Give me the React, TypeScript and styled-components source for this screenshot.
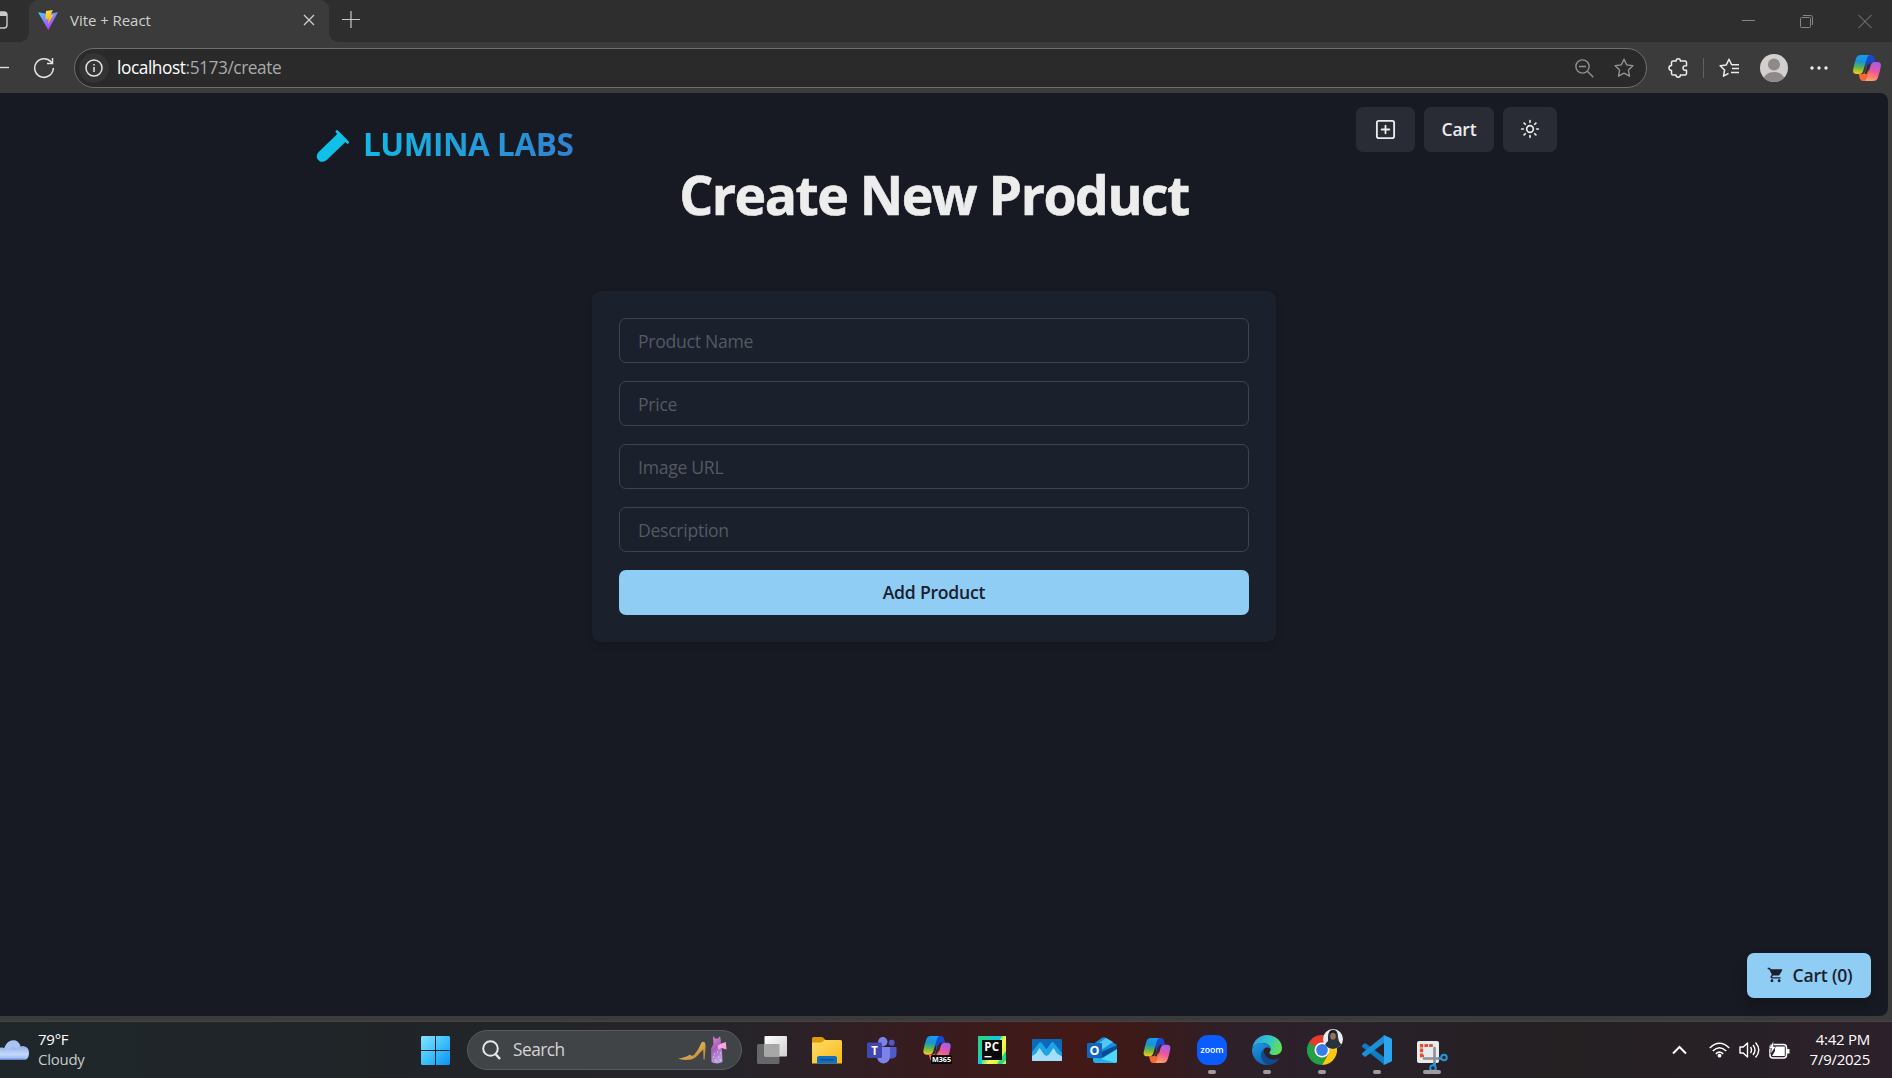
import React from 'react';
import styled, { createGlobalStyle } from 'styled-components';
import { SquarePlus, Sun } from 'lucide-react';
import { IoMdCart } from 'react-icons/io';

const GlobalStyle = createGlobalStyle`
  * { box-sizing: border-box; }
  html, body { margin: 0; padding: 0; background: #3b3b3b; }
  body { font-family: 'Open Sans', 'Noto Sans', sans-serif; overflow: hidden; }
  svg { display: block; flex: none; }
`;

const Screen = styled.div`
  display: flex;
  flex-direction: column;
  width: 1892px;
  height: 1078px;
  overflow: hidden;
  background: #3b3b3b;
`;

/* ---------- browser chrome ---------- */

const TabStrip = styled.div`
  display: flex;
  height: 42px;
  background: #2e2e2e;
`;

const TabMenuSlot = styled.div`
  width: 29px;
  padding-top: 11px;
`;

const Tab = styled.div`
  position: relative;
  display: flex;
  align-items: center;
  width: 300px;
  height: 42px;
  padding: 0 14px 3px 9px;
  background: #3b3b3b;
  border-radius: 9px 9px 0 0;

  &::before,
  &::after {
    content: '';
    position: absolute;
    bottom: 0;
    width: 9px;
    height: 9px;
  }
  &::before {
    left: -9px;
    background: radial-gradient(circle at 0 0, transparent 8.5px, #3b3b3b 9px);
  }
  &::after {
    right: -9px;
    background: radial-gradient(circle at 100% 0, transparent 8.5px, #3b3b3b 9px);
  }
`;

const TabTitle = styled.span`
  flex: 1;
  margin-left: 12px;
  font-size: 15px;
  line-height: 20px;
  letter-spacing: -0.05px;
  color: #d0d0d0;
`;

const NewTab = styled.div`
  padding: 11px 0 0 13px;
`;

const WindowControls = styled.div`
  display: flex;
  gap: 45px;
  margin-left: auto;
  padding: 14px 20px 0 0;
`;

const Toolbar = styled.div`
  display: flex;
  align-items: center;
  height: 51px;
  padding: 1px 11px 0 0;
`;

const NavButtons = styled.div`
  display: flex;
  align-items: center;
  gap: 24px;
  width: 74px;
`;

const AddressBar = styled.div`
  display: flex;
  align-items: center;
  width: 1573px;
  height: 40px;
  padding: 0 12px 0 4px;
  background: #2a2a2a;
  border: 1px solid #6e6e6e;
  border-radius: 20px;
`;

const SiteInfo = styled.div`
  display: grid;
  place-items: center;
  width: 30px;
  height: 30px;
  border-radius: 50%;
  background: #343434;
`;

const Url = styled.span`
  flex: 1;
  margin-left: 8px;
  padding-bottom: 1px;
  font-size: 17.3px;
  line-height: 24px;
  letter-spacing: -0.43px;
  color: #a9a9a9;
  b { font-weight: 400; color: #fff; }
`;

const AddressIcons = styled.div`
  display: flex;
  align-items: center;
  gap: 20px;
`;

const ToolbarIcons = styled.div`
  display: flex;
  align-items: center;
  margin-left: 6px;
`;

const ToolbarItem = styled.div<{ $gap: number }>`
  margin-left: ${(p) => p.$gap}px;
`;

const Divider = styled.i`
  width: 1px;
  height: 20px;
  margin-left: 15px;
  background: #606060;
`;

const Avatar = styled.div`
  width: 28px;
  height: 28px;
  overflow: hidden;
  border-radius: 50%;
  background: #d2d0ce;
`;

/* ---------- web page ---------- */

const Page = styled.main`
  display: flex;
  flex-direction: column;
  width: 1888px;
  height: 923px;
  padding: 14px 17px 18px 0;
  background: #181a23;
  border-radius: 0 8px 8px 0;
`;

const Header = styled.header`
  display: flex;
  justify-content: space-between;
  width: 1241px;
  height: 57px;
  margin-left: 316px;
`;

const Brand = styled.div`
  display: flex;
  align-items: center;
  gap: 13px;
  height: 45px;
  margin-top: 16px;
`;

const BrandName = styled.span`
  margin-top: -3px;
  font-size: 31.5px;
  font-weight: 700;
  line-height: 44px;
  letter-spacing: -0.45px;
  color: transparent;
  background: linear-gradient(to right, #13b9e4, #3182ce);
  background-clip: text;
  -webkit-background-clip: text;
`;

const Actions = styled.nav`
  display: flex;
  gap: 9px;
`;

const GhostButton = styled.button<{ $width: number }>`
  display: grid;
  place-items: center;
  width: ${(p) => p.$width}px;
  height: 45px;
  padding: 0 0 1px;
  border: 0;
  border-radius: 7px;
  background: #292c35;
  color: #ececec;
  font: 600 17.5px/24px 'Open Sans', 'Noto Sans', sans-serif;
  letter-spacing: -0.2px;
`;

const Title = styled.h1`
  width: 1868px;
  margin: 0;
  text-align: center;
  font-size: 53.5px;
  font-weight: 700;
  line-height: 62px;
  letter-spacing: -1.5px;
  color: #ededed;
  -webkit-text-stroke: 0.6px #ededed;
`;

const Card = styled.form`
  display: flex;
  flex-direction: column;
  gap: 18px;
  width: 684px;
  margin: 65px 0 0 592px;
  padding: 27px;
  background: #1a202c;
  border-radius: 9px;
  box-shadow: 0 4px 7px rgba(0, 0, 0, 0.13);
`;

const Field = styled.input`
  width: 100%;
  height: 45px;
  padding: 0 17px 0 18px;
  border: 1px solid #3f434d;
  border-radius: 7px;
  outline: 0;
  background: transparent;
  color: #ececec;
  font: 400 17.6px/24px 'Open Sans', 'Noto Sans', sans-serif;
  letter-spacing: -0.28px;
  &::placeholder { color: #555962; opacity: 1; }
`;

const PrimaryButton = styled.button<{ $floating?: boolean }>`
  display: flex;
  align-items: center;
  justify-content: center;
  gap: 9px;
  height: 45px;
  width: ${(p) => (p.$floating ? '124px' : '100%')};
  margin: ${(p) => (p.$floating ? 'auto 0 0 auto' : '0')};
  padding: 0 0 1px;
  border: 0;
  border-radius: 7px;
  background: #90cdf4;
  color: #1a202c;
  font: 600 17.6px/24px 'Open Sans', 'Noto Sans', sans-serif;
  letter-spacing: -0.22px;
  box-shadow: ${(p) => (p.$floating ? '0 8px 14px rgba(0,0,0,0.2)' : 'none')};
`;

/* ---------- taskbar ---------- */

const Taskbar = styled.footer`
  display: flex;
  align-items: center;
  height: 57px;
  margin-top: 5px;
  border-top: 1px solid #454547;
  background: linear-gradient(
    to right,
    #20272a 0, #1f2528 300px, #222428 500px, #26242a 740px,
    #371c1f 920px, #431916 1080px, #3c1a18 1130px, #2d2029 1240px,
    #2a212a 1340px, #242022 1560px, #2c212b 1892px
  );
`;

const Weather = styled.div`
  display: flex;
  align-items: center;
  gap: 9px;
  width: 421px;
`;

const Lines = styled.div<{ $right?: boolean }>`
  display: flex;
  flex-direction: column;
  text-align: ${(p) => (p.$right ? 'right' : 'left')};
  font-size: 15px;
  line-height: 20px;
  letter-spacing: -0.26px;
  color: #fff;
  padding-bottom: 3px;
`;

const Muted = styled.span`
  color: #c8cacb;
`;

const SearchBox = styled.div`
  display: flex;
  align-items: center;
  width: 275px;
  height: 40px;
  margin: 0 15px 0 17px;
  padding: 0 13px 0 14px;
  border: 1px solid #585b5e;
  border-radius: 20px;
  background: #414447;
`;

const SearchLabel = styled.span`
  flex: 1;
  margin-left: 12px;
  font-size: 17.3px;
  line-height: 24px;
  letter-spacing: -0.5px;
  color: #d3d4d5;
`;

const Apps = styled.div`
  display: flex;
  gap: 25px;
`;

const AppSlot = styled.div<{ $drop?: number }>`
  position: relative;
  display: grid;
  place-items: center;
  width: 30px;
  height: 56px;
  padding-top: ${(p) => p.$drop ?? 0}px;
`;

const Running = styled.i<{ $active?: boolean }>`
  position: absolute;
  bottom: 4px;
  left: ${(p) => (p.$active ? 6 : 11)}px;
  width: ${(p) => (p.$active ? 18 : 8)}px;
  height: 4px;
  border-radius: 2px;
  background: #9f9b9f;
`;

const ProfileBadge = styled.div`
  position: absolute;
  top: 7px;
  left: 16px;
`;

const Tray = styled.div`
  display: flex;
  align-items: center;
  margin-left: auto;
  padding-right: 22px;
`;

const TrayStatus = styled.div`
  display: flex;
  align-items: center;
  gap: 9px;
  width: 101px;
  margin-left: 22px;
`;

/* ---------- drawings ---------- */

const ViteLogo = () => (
  <svg width="20" height="20" viewBox="0 0 20 20">
    <defs>
      <linearGradient id="vite-a" x1="0" y1="0" x2="0.6" y2="1">
        <stop offset="0" stopColor="#41d1ff" /><stop offset="1" stopColor="#bd34fe" />
      </linearGradient>
      <linearGradient id="vite-b" x1="0" y1="0" x2="0.2" y2="1">
        <stop offset="0" stopColor="#ffe34a" /><stop offset="1" stopColor="#ffa800" />
      </linearGradient>
    </defs>
    <path d="M0 2.2 10 4l10-1.8L10.3 20z" fill="url(#vite-a)" />
    <path d="M8 1 14.8 0l-2.3 5.2 3.3-.6-5.8 9.6.6-5.4-3.2.7z" fill="url(#vite-b)" />
  </svg>
);

const CopilotLogo = ({ id, width = 28, height = 26 }: { id: string; width?: number; height?: number }) => (
  <svg width={width} height={height} viewBox="0 0 28 26">
    <defs>
      <linearGradient id={`${id}-l`} x1="0.4" y1="0" x2="0.3" y2="1">
        <stop offset="0" stopColor="#149cf2" /><stop offset="0.35" stopColor="#1b93cf" />
        <stop offset="0.65" stopColor="#5eb653" /><stop offset="1" stopColor="#f8cb12" />
      </linearGradient>
      <linearGradient id={`${id}-r`} x1="0.7" y1="0" x2="0.4" y2="1">
        <stop offset="0" stopColor="#a25bf0" /><stop offset="0.5" stopColor="#ee569d" />
        <stop offset="1" stopColor="#ffa15b" />
      </linearGradient>
    </defs>
    <path d="M10 0h8.2q2.2 0 2.9 2.3L22.3 7h-3.8q-2 0-2.7 2.4l-1.9 6.3z" fill="#1748cf" />
    <path d="M18 26H9.8q-2.2 0-2.9-2.3L5.7 19h3.8q2 0 2.7-2.4l2-6.4z" fill="#f36a3a" />
    <path d="M7.8 0h8.6q-1.8.8-2.5 3.2l-3.7 12.6Q9.2 19 6.3 19H3.7Q-.6 19 .2 14.5 1.2 8.6 3.2 3 4.3 0 7.8 0z" fill={`url(#${id}-l)`} />
    <path d="M20.2 26h-8.6q1.8-.8 2.5-3.2l3.7-12.6Q18.8 7 21.7 7h2.6q4.3 0 3.5 4.5-1 5.9-3 11.5-1.100 3-4.600 3z" fill={`url(#${id}-r)`} />
    <path d="M14.600 9.500h2.700l-3.600 9.500H11.600z" fill="#2e2b2e" />
  </svg>
);

const TestTube = () => (
  <svg width="34" height="34" viewBox="0 0 34 34" fill="#0fc1e9">
    <path d="M20 6.200 22 3.500 30.500 12 28.300 14 11 30.800Q7.500 34 3.600 32.200-.3 30 1.100 25.600 1.500 24.200 2.700 23z" />
    <path d="M20.900 2.600 31.600 13.200" stroke="#0fc1e9" strokeWidth="2.800" strokeLinecap="round" />
  </svg>
);

const starPath = 'M10 1.200l2.700 5.700 6.200.8-4.500 4.300 1.100 6.200L10 15.200l-5.500 3 1.100-6.200L1.100 7.700l6.200-.8z';

const FolderIcon = () => (
  <svg width="30" height="27" viewBox="0 0 30 27">
    <defs><linearGradient id="folder" x1="0" y1="0" x2="1" y2="1"><stop stopColor="#ffdc6b" /><stop offset="1" stopColor="#f9b916" /></linearGradient></defs>
    <path d="M0 1.500Q0 0 1.500 0h8q1 0 1.800.8L13.500 3v5H0z" fill="#dd9a06" />
    <path d="M0 5.500h9.500L12.500 3H28.500Q30 3 30 4.500V26.500H0z" fill="url(#folder)" />
    <path d="M5 26.500V21q0-2 2-2h16q2 0 2 2v5.500z" fill="#0f6fc0" />
    <path d="M8 22.800h14" stroke="#0b4b8c" strokeWidth="1.300" />
  </svg>
);

const TeamsIcon = () => (
  <svg width="30" height="27" viewBox="0 0 30 27">
    <circle cx="24.700" cy="5.700" r="3" fill="#5059c9" />
    <circle cx="15.800" cy="4.800" r="4.700" fill="#7b83eb" />
    <path d="M20 10h9.500v6.500q0 5-5 5H20z" fill="#5059c9" />
    <path d="M10 10h13v9q0 7-6.500 7.500Q10 26 10 19z" fill="#7b83eb" />
    <rect x="0" y="5.500" width="15" height="15.500" rx="1.200" fill="#4247b0" />
    <text x="7.500" y="17.500" textAnchor="middle" fontFamily="Open Sans" fontWeight="700" fontSize="11.500" fill="#fff">T</text>
  </svg>
);

const M365Icon = () => (
  <svg width="30" height="28" viewBox="0 0 30 28">
    <CopilotLogo id="m365" width={30} height={25.5} />
    <rect x="9" y="19" width="21" height="9" rx="1.500" fill="#080808" />
    <text x="19.500" y="26" textAnchor="middle" fontFamily="Open Sans" fontWeight="700" fontSize="7.200" fill="#fff">M365</text>
  </svg>
);

const PyCharmIcon = () => (
  <svg width="28" height="28" viewBox="0 0 28 28">
    <defs><linearGradient id="pc" x1="0" y1="0" x2="1" y2="0.700"><stop stopColor="#21d789" /><stop offset="0.450" stopColor="#1fcfa4" /><stop offset="0.700" stopColor="#fcf84a" /><stop offset="1" stopColor="#c8ee4a" /></linearGradient></defs>
    <rect width="28" height="28" fill="url(#pc)" />
    <path d="M14 0h10l-3 5h-9zM0 22l4-2v8H0z" fill="#12c9dc" />
    <path d="M19 28 28 15v9l-4 4z" fill="#21d789" />
    <rect x="4" y="4" width="20" height="20" fill="#0a0a0a" />
    <text x="13.800" y="15.200" textAnchor="middle" fontFamily="Open Sans" fontWeight="700" fontSize="11.500" letterSpacing="0.300" fill="#fff">PC</text>
    <rect x="6.500" y="20" width="7" height="1.400" fill="#fff" />
  </svg>
);

const PhotosIcon = () => (
  <svg width="30" height="22" viewBox="0 0 30 22">
    <rect width="30" height="22" rx="1" fill="#0d68b8" />
    <path d="M0 13 7 4q1.500-1.500 3 .3l4.500 6L19 4q1.500-1.800 3 0l8 10v8H0z" fill="#1ea3e4" />
    <path d="M0 17l4-2.500L7.500 9 12 15.500l2.500 1.500L17 15.500 21.500 9 25 14.500l5 3V21q0 1-1 1H1q-1 0-1-1z" fill="#a5defa" />
  </svg>
);

const OutlookIcon = () => (
  <svg width="30" height="27" viewBox="0 0 30 27">
    <path d="M5 8 15 .8q2-1.300 4 0L30 8v16q0 2-2 2H8z" fill="#1490df" />
    <path d="M8 9 19 1l7 4-16 11z" fill="#4fc8f4" />
    <path d="M12 16 30 8v7L16 22z" fill="#0a4c98" />
    <path d="M8 25.500 30 12v12q0 2-2 2H9z" fill="#50d8fb" />
    <path d="M6 20 28 25.500q-1 .5-2 .5H9q-3 0-3-3z" fill="#24aef0" />
    <rect y="6" width="15" height="15" rx="1" fill="#1066bd" />
    <text x="7.500" y="17.800" textAnchor="middle" fontFamily="Open Sans" fontWeight="700" fontSize="12.500" fill="#fff">O</text>
  </svg>
);

const ZoomIcon = () => (
  <svg width="30" height="30" viewBox="0 0 30 30">
    <rect width="30" height="30" rx="11" fill="#0b5cff" />
    <text x="15" y="17.500" textAnchor="middle" fontFamily="Open Sans" fontWeight="600" fontSize="8.700" fill="#fff">zoom</text>
  </svg>
);

const EdgeIcon = () => (
  <svg width="30" height="30" viewBox="0 0 30 30">
    <defs>
      <linearGradient id="edge-t" x1="0" y1="0.300" x2="1" y2="0.600"><stop stopColor="#2f9fe0" /><stop offset="0.500" stopColor="#30c6cd" /><stop offset="1" stopColor="#66e24d" /></linearGradient>
      <linearGradient id="edge-b" x1="0" y1="0" x2="0.700" y2="1"><stop stopColor="#1e9be2" /><stop offset="1" stopColor="#0f58a8" /></linearGradient>
    </defs>
    <path d="M.3 13C1.500 5.500 7.500 0 15 0c8.500 0 15 6 15 13 0 4.500-3.500 7-7.500 7-3 0-5-1-5-2.300 0-1 1.200-1.200 1.200-3.700 0-3-3.200-6-8-6C6 8 2 10 .3 13z" fill="url(#edge-t)" />
    <path d="M0 15C.5 10.500 5 8 9.500 8c5 0 9.200 2.800 9.200 6-2-2-5-2-6.500 0C9 18.500 12 25.500 20 25.500c3 0 5.500-1 7.500-2.500C24.500 27.500 20 30 15 30 6.500 30 0 23 0 15z" fill="url(#edge-b)" />
    <path d="M12.200 14C10.500 15 9 17.500 9 20c0 4.500 3 8.500 7.500 9.900 4.500-.5 8.500-3 11-6.900-1 1-10 3.500-14-2.500-1.500-2.300-2-4.500-1.300-6.500z" fill="#114a8b" />
  </svg>
);

const ChromeIcon = () => (
  <svg width="30" height="30" viewBox="0 0 30 30">
    <path d="M15 15 2 7.500A15 15 0 0 1 28 7.500z" fill="#e33b2e" />
    <path d="M2 7.500A15 15 0 0 0 15 30l6.500-11.200L15 15z" fill="#23a047" />
    <path d="M28 7.500A15 15 0 0 1 15 30l6.500-11.200L15 7.500z" fill="#fdc70c" />
    <path d="M2 7.500 8.500 18.800 15 15V7.500h13L24 3 6 3z" fill="#e33b2e" />
    <path d="M2 7.500 8.500 18.800 12 22 15 15z" fill="#23a047" />
    <circle cx="15" cy="15" r="7.500" fill="#fff" /><circle cx="15" cy="15" r="5.900" fill="#3a7de8" />
  </svg>
);

const ProfilePhoto = () => (
  <svg width="20" height="20" viewBox="0 0 20 20">
    <clipPath id="profile"><circle cx="10" cy="10" r="10" /></clipPath>
    <g clipPath="url(#profile)">
      <rect width="20" height="20" fill="#eceeee" />
      <path d="M5 8Q5 1 10 .8T15 8q0 4 3.500 8v4H2q-1-5 3-8z" fill="#28343a" />
      <ellipse cx="10" cy="7" rx="2.800" ry="3.800" fill="#94705f" />
      <path d="M7 5.500Q10 1.500 13 5.500L13 3Q10 0 7 3z" fill="#191b20" />
    </g>
  </svg>
);

const CodeIcon = () => (
  <svg width="30" height="30" viewBox="0 0 30 30">
    <path d="M0 10.500 2.300 8.500q.8-.5 1.600 0L22 22v7.500L.3 12q-.8-.7-.3-1.500z" fill="#0f7cc4" />
    <path d="M0 19.500 2.300 21.500q.8.500 1.600 0L22 8V.5L.3 18q-.8.7-.3 1.500z" fill="#1b8fd8" />
    <path d="M21 .7Q22 0 23 .4l6 2.800q1 .5 1 1.600v20.400q0 1.100-1 1.600l-6 2.800q-1 .4-2-.3 1 .3 1-1.200V1.900Q22 .4 21 .7z" fill="#2ba7f2" />
  </svg>
);

const SnipIcon = () => (
  <svg width="31" height="32" viewBox="0 0 31 32">
    <rect y="1" width="22" height="22" rx="2" fill="#e9e9ee" />
    <path d="M4.500 17V5.500h12" fill="none" stroke="#e0512f" strokeWidth="3.200" strokeDasharray="3.600 1.200" />
    <path d="M3 16h4" stroke="#e0512f" strokeWidth="2.500" />
    <path d="M17.500 8v17M7 18.500h17" stroke="#8d9096" strokeWidth="2.600" strokeLinecap="round" />
    <circle cx="27" cy="17.500" r="2.800" fill="none" stroke="#2493d8" strokeWidth="2" />
    <circle cx="16" cy="28" r="2.800" fill="none" stroke="#2493d8" strokeWidth="2" />
    <path d="M17.500 22v4M21 18.500h3.500" stroke="#2493d8" strokeWidth="2" />
  </svg>
);

const TaskViewIcon = () => (
  <svg width="30" height="28" viewBox="0 0 30 28">
    <defs><linearGradient id="tv" x1="0" y1="0" x2="1" y2="1"><stop stopColor="#fff" /><stop offset="1" stopColor="#cfcfcf" /></linearGradient></defs>
    <rect y="8" width="22.500" height="20" rx="1.500" fill="#666769" />
    <rect x="7.500" width="22.500" height="20.500" rx="1" fill="url(#tv)" />
    <path d="M7.500 8h15v12.500h-15z" fill="#a7a7a7" />
  </svg>
);

const WindowsLogo = () => (
  <svg width="29" height="29" viewBox="0 0 29 29">
    <defs><linearGradient id="win" gradientUnits="userSpaceOnUse" x1="0" y1="0" x2="29" y2="29"><stop stopColor="#86e2ff" /><stop offset="0.500" stopColor="#3fc1fb" /><stop offset="1" stopColor="#0a92f5" /></linearGradient></defs>
    <path d="M1 0h13v14H0V1zM15 0h13l1 1v13H15zM0 15h14v14H1l-1-1zM15 15h14v13l-1 1H15z" fill="url(#win)" />
  </svg>
);

const SearchHighlight = () => (
  <svg width="50" height="30" viewBox="0 0 50 30">
    <defs>
      <linearGradient id="shoe" x1="0" y1="0" x2="1" y2="1"><stop stopColor="#f8d77b" /><stop offset="1" stopColor="#b97f26" /></linearGradient>
      <linearGradient id="dress" x1="0" y1="0" x2="0.300" y2="1"><stop stopColor="#ee8fdc" /><stop offset="0.500" stopColor="#a35fb5" /><stop offset="1" stopColor="#bfa0e4" /></linearGradient>
    </defs>
    <path d="M0 23.800Q8 22.500 12 19.500q1.500 2.500 4.500 0Q21 14 23.500 7.500q2.500-1.500 3.500.5.800 2 .5 5l-.8 11.500h-1.200L25.200 14.500Q22.500 17 19.500 20.500q-3.500 4-8.500 4.300Q4 25.200 0 23.800z" fill="url(#shoe)" />
    <path d="M35 1l2 2.500h3L42 1l1 5-.5 4 1.500 5 .5 12q-5.500 2.800-11 0L33 14l2.500-5z" fill="url(#dress)" />
    <path d="M42 9l5.800-2 .7 7.500-5-1.500-3 2-1-4z" fill="#f7a3e6" />
    <path d="M36 19h1M40 22h1M37 25h1M42 18h1M39 17h1M42 25h1M35 22h1" stroke="#ecdcff" />
  </svg>
);

const WeatherIcon = () => (
  <svg width="29" height="20" viewBox="0 0 29 20">
    <defs><linearGradient id="cloud" x1="0" y1="0" x2="0" y2="1"><stop stopColor="#8faee9" /><stop offset="0.600" stopColor="#c5d8fa" /><stop offset="1" stopColor="#8fb1f0" /></linearGradient></defs>
    <path d="M4 13Q3.500 8 6 4.500 9 .3 13.500.3q5 0 7 5.700V16H5z" fill="#a9c3f2" />
    <path d="M-5 14q0-6 6-6.500Q5 7 8 10q3-5 10-1 1-3 5-3 6 .5 6 7t-5 7H0z" fill="url(#cloud)" />
    <path d="M0 19.300h25" stroke="#557dc7" />
  </svg>
);

const fields = ['Product Name', 'Price', 'Image URL', 'Description'];

const apps: { name: string; icon: React.ReactNode; running?: boolean; active?: boolean; drop?: number; badge?: React.ReactNode }[] = [
  { name: 'task-view', icon: <TaskViewIcon /> },
  { name: 'explorer', icon: <FolderIcon /> },
  { name: 'teams', icon: <TeamsIcon /> },
  { name: 'm365', icon: <M365Icon /> },
  { name: 'pycharm', icon: <PyCharmIcon /> },
  { name: 'photos', icon: <PhotosIcon /> },
  { name: 'outlook', icon: <OutlookIcon /> },
  { name: 'copilot', icon: <CopilotLogo id="task-copilot" width={28} height={25} /> },
  { name: 'zoom', icon: <ZoomIcon />, running: true },
  { name: 'edge', icon: <EdgeIcon />, running: true },
  { name: 'chrome', icon: <ChromeIcon />, running: true, badge: <ProfilePhoto /> },
  { name: 'code', icon: <CodeIcon />, running: true },
  { name: 'snip', icon: <SnipIcon />, running: true, active: true, drop: 12 },
];

const BrowserChrome = () => (
  <>
    <TabStrip>
      <TabMenuSlot>
        <svg width="9" height="18" viewBox="0 0 9 18">
          <rect x="-9" y="1" width="16" height="16" rx="3" fill="none" stroke="#c9c9c9" strokeWidth="1.400" />
          <path d="M0 1h5q2 0 2 3v1H0z" fill="#c9c9c9" />
        </svg>
      </TabMenuSlot>
      <Tab>
        <ViteLogo />
        <TabTitle>Vite + React</TabTitle>
        <svg width="12" height="12" viewBox="0 0 12 12" stroke="#d0d0d0" strokeWidth="1.300"><path d="M1 1l10 10M11 1L1 11" /></svg>
      </Tab>
      <NewTab>
        <svg width="18" height="18" viewBox="0 0 18 18" stroke="#c9c9c9" strokeWidth="1.200"><path d="M9 0v17M0 8.500h18" /></svg>
      </NewTab>
      <WindowControls>
        <svg width="13" height="14" viewBox="0 0 13 14" stroke="#858585"><path d="M0 6.500h13" /></svg>
        <svg width="13" height="14" viewBox="0 0 13 14" fill="none" stroke="#858585">
          <rect x=".5" y="3.500" width="10" height="10" rx="1" /><path d="M3 1.500h7.500q2 0 2 2V11" />
        </svg>
        <svg width="14" height="14" viewBox="0 0 14 14" stroke="#858585"><path d="M.5 1l13 13M13.500 1l-13 13" /></svg>
      </WindowControls>
    </TabStrip>
    <Toolbar>
      <NavButtons>
        <svg width="9" height="20" viewBox="0 0 9 20" stroke="#ddd" strokeWidth="1.400"><path d="M0 9.500h9" /></svg>
        <svg width="22" height="22" viewBox="0 0 22 22" fill="none" stroke="#e4e4e4" strokeWidth="1.500">
          <path d="M20.300 11a9.300 9.300 0 1 1-2.400-6.200l1.600 1.500M19.500 1v5.500H14" />
        </svg>
      </NavButtons>
      <AddressBar>
        <SiteInfo>
          <svg width="18" height="18" viewBox="0 0 18 18" fill="none" stroke="#e4e4e4" strokeWidth="1.500"><circle cx="9" cy="9" r="8" /><path d="M9 8v5M9 5v1.500" /></svg>
        </SiteInfo>
        <Url><b>localhost</b>:5173/create</Url>
        <AddressIcons>
          <svg width="19" height="19" viewBox="0 0 19 19" fill="none" stroke="#919191" strokeWidth="1.400"><circle cx="7.500" cy="7.500" r="6.600" /><path d="M4 7.500h7M12.300 12.300l6 6" /></svg>
          <svg width="20" height="20" viewBox="0 0 20 20" fill="none" stroke="#919191" strokeWidth="1.400" strokeLinejoin="round"><path d={starPath} /></svg>
        </AddressIcons>
      </AddressBar>
      <ToolbarIcons>
        <ToolbarItem $gap={15}>
          <svg width="20" height="20" viewBox="0 0 20 20" fill="none" stroke="#ececec" strokeWidth="1.500" strokeLinejoin="round">
            <path d="M5 3h3.200Q8 .8 10.200.8T12.400 3H17q1.500 0 1.500 1.500V7.800q-3.500-.3-3.500 2.200t3.500 2.200V15.500q0 1.500-1.500 1.500h-4.600q0 2.200-2.200 2.200T8 17H5q-1.500 0-1.500-1.500v-3.100Q1 12.300 1 10t2.500-2.400V4.500Q3.500 3 5 3z" />
          </svg>
        </ToolbarItem>
        <Divider />
        <ToolbarItem $gap={15}>
          <svg width="21" height="20" viewBox="0 0 21 20" fill="none" stroke="#ececec" strokeWidth="1.500" strokeLinejoin="round">
            <path d="M13.500 6.700 12.500 6.500 10 1.200 7.300 6.900 1.100 7.700 5.600 12 4.500 18.200 9.500 15.300" /><path d="M13 6.700h7M13 10.500h7M12 14.500h8" />
          </svg>
        </ToolbarItem>
        <ToolbarItem $gap={20}>
          <Avatar>
            <svg width="28" height="28" viewBox="0 0 28 28" fill="#8f8a87"><circle cx="14" cy="10.500" r="6" /><ellipse cx="14" cy="26" rx="10.500" ry="8" /></svg>
          </Avatar>
        </ToolbarItem>
        <ToolbarItem $gap={22}>
          <svg width="18" height="4" viewBox="0 0 18 4" fill="#f0f0f0"><circle cx="2" cy="2" r="1.700" /><circle cx="9" cy="2" r="1.700" /><circle cx="16" cy="2" r="1.700" /></svg>
        </ToolbarItem>
        <ToolbarItem $gap={25}>
          <CopilotLogo id="bar-copilot" />
        </ToolbarItem>
      </ToolbarIcons>
    </Toolbar>
  </>
);

export default function App() {
  return (
    <Screen>
      <GlobalStyle />
      <BrowserChrome />
      <Page>
        <Header>
          <Brand>
            <TestTube />
            <BrandName>LUMINA LABS</BrandName>
          </Brand>
          <Actions>
            <GhostButton $width={59}><SquarePlus size={23} strokeWidth={1.9} /></GhostButton>
            <GhostButton $width={70}>Cart</GhostButton>
            <GhostButton $width={54}><Sun size={20} /></GhostButton>
          </Actions>
        </Header>
        <Title>Create New Product</Title>
        <Card>
          {fields.map((label) => <Field key={label} placeholder={label} />)}
          <PrimaryButton type="button">Add Product</PrimaryButton>
        </Card>
        <PrimaryButton type="button" $floating><IoMdCart size={18} />Cart (0)</PrimaryButton>
      </Page>
      <Taskbar>
        <Weather>
          <WeatherIcon />
          <Lines><span>79°F</span><Muted>Cloudy</Muted></Lines>
        </Weather>
        <WindowsLogo />
        <SearchBox>
          <svg width="19" height="20" viewBox="0 0 19 20" fill="none" stroke="#e6e7e8" strokeWidth="2"><circle cx="8.500" cy="8.500" r="7.300" /><path d="M13.500 14l4.500 5" strokeWidth="2.500" /></svg>
          <SearchLabel>Search</SearchLabel>
          <SearchHighlight />
        </SearchBox>
        <Apps>
          {apps.map((app) => (
            <AppSlot key={app.name} $drop={app.drop}>
              {app.running && <Running $active={app.active} />}
              {app.icon}
              {app.badge && <ProfileBadge>{app.badge}</ProfileBadge>}
            </AppSlot>
          ))}
        </Apps>
        <Tray>
          <svg width="15" height="10" viewBox="0 0 15 10" fill="none" stroke="#fff" strokeWidth="2"><path d="M1 8.500l6.500-6.500L14 8.500" /></svg>
          <TrayStatus>
            <svg width="21" height="16" viewBox="0 0 21 16" fill="none" stroke="#fff" strokeWidth="1.600">
              <path d="M.8 6q9.700-9.500 19.400 0M3.800 9q6.700-6.500 13.400 0M6.800 11.800q3.700-3.400 7.400 0" />
              <circle cx="10.500" cy="13.700" r="1.900" fill="#fff" stroke="none" />
            </svg>
            <svg width="21" height="18" viewBox="0 0 21 18" fill="none" stroke="#fff" strokeWidth="1.400" strokeLinejoin="round">
              <path d="M1 6h3.200L8.500 2v14L4.200 12H1zM11.500 6q2 3 0 6M14 4q4 5 0 10M16.500 1.500q6.500 7.500 0 15" />
            </svg>
            <svg width="21" height="18" viewBox="0 0 21 18">
              <rect x="1" y="3.500" width="16.500" height="13.500" rx="3" fill="none" stroke="#fff" strokeWidth="1.500" />
              <path d="M6 5.500h9.800v9.500H3l3-5zM18 8h2.500v4.500H18z" fill="#fff" />
              <path d="M4.500 0 0 7.500h2.500L1.500 13 7 5.500H4.500z" fill="#fff" stroke="#2a2128" strokeWidth=".5" />
            </svg>
          </TrayStatus>
          <Lines $right><span>4:42 PM</span><span>7/9/2025</span></Lines>
        </Tray>
      </Taskbar>
    </Screen>
  );
}
